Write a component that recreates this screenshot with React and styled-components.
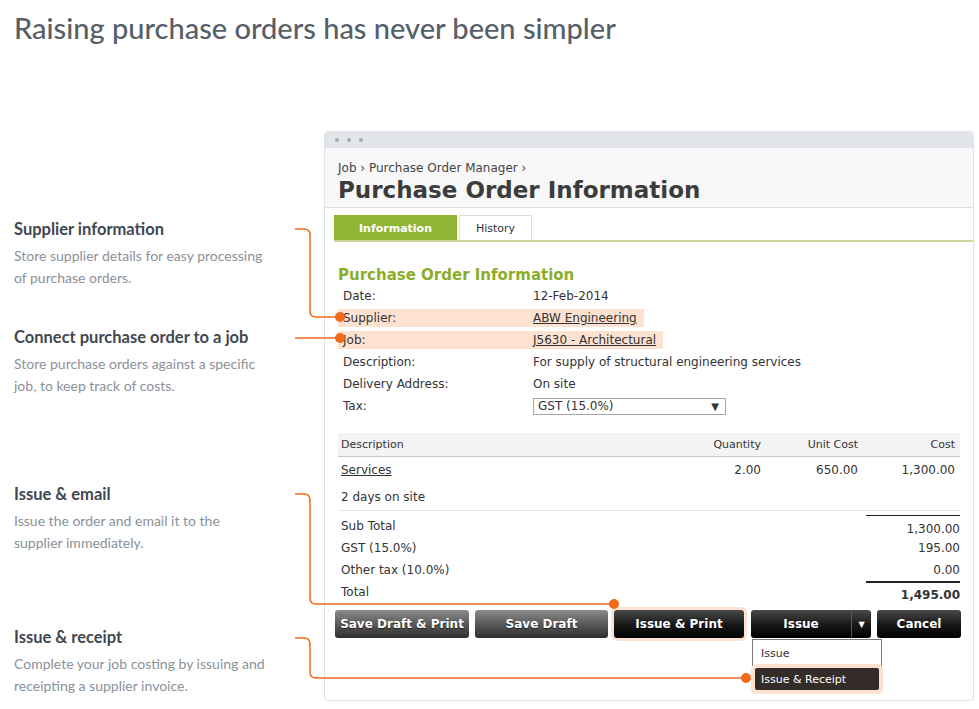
import React from 'react'
import styled, { createGlobalStyle } from 'styled-components'

const GlobalStyle = createGlobalStyle`
  body {
    margin: 0;
    background: #fff;
  }
`

const ORANGE = '#f26a1b'
const HALO = '#fde2d2'

const Page = styled.div`
  position: relative;
  width: 979px;
  height: 709px;
  overflow: hidden;
  font-family: Lato, "Open Sans", sans-serif;
`

const Heading = styled.h1`
  margin: 11px 0 0 14px;
  height: 120px;
  font-size: 29px;
  line-height: 34px;
  font-weight: 500;
  color: #575f69;
`

const Main = styled.div`
  display: flex;
  flex-direction: row;
`

const Features = styled.div`
  width: 310px;
  padding: 87px 0 0 14px;
  display: flex;
  flex-direction: column;
`

const Feature = styled.div`
  margin-top: ${(p) => p.gap || 0}px;
`

const FeatureTitle = styled.div`
  font-size: 16.5px;
  line-height: 22px;
  font-weight: 700;
  color: #3f4751;
`

const FeatureText = styled.div`
  margin-top: 5px;
  font-size: 14px;
  line-height: 22px;
  color: #8b9199;
`

const Window = styled.div`
  position: relative;
  width: 648px;
  height: 568px;
  border: 1px solid #dfe2e6;
  border-radius: 4px;
  font-family: "DejaVu Sans", Verdana, sans-serif;
  font-size: 12px;
  color: #333;
  background: #fff;
`

const TitleBar = styled.div`
  height: 16px;
  background: #e2e5e9;
  border-radius: 3px 3px 0 0;
  display: flex;
  align-items: center;
  gap: 8px;
  padding-left: 10px;
`

const Dot = styled.span`
  width: 4px;
  height: 4px;
  border-radius: 50%;
  background: #a7abb1;
`

const Header = styled.div`
  height: 60px;
  background: #f8f8f8;
  border-bottom: 1px solid #dedede;
  padding: 12px 0 0 13px;
  box-sizing: border-box;
`

const Crumb = styled.div`
  font-size: 12px;
  line-height: 16px;
  color: #444;
`

const PageTitle = styled.div`
  font-size: 23px;
  line-height: 28px;
  font-weight: 700;
  color: #3c3c3c;
`

const Tabs = styled.div`
  margin: 7px 0 0 9px;
  display: flex;
  gap: 2px;
  border-bottom: 2px solid #c6d99b;
`

const Tab = styled.div`
  width: ${(p) => p.w}px;
  height: 25px;
  box-sizing: border-box;
  display: flex;
  align-items: center;
  justify-content: center;
  font-size: 11px;
  font-weight: ${(p) => (p.active ? 700 : 400)};
  color: ${(p) => (p.active ? '#fff' : '#333')};
  background: ${(p) => (p.active ? '#8fb534' : '#fff')};
  border: 1px solid ${(p) => (p.active ? '#8fb534' : '#dcdcdc')};
  border-bottom: none;
`

const Body = styled.div`
  padding: 0 14px 0 13px;
`

const SectionTitle = styled.div`
  margin-top: 23px;
  font-size: 15px;
  line-height: 20px;
  font-weight: 700;
  color: #8aae2b;
`

const FormRow = styled.div`
  height: 22px;
  display: flex;
  align-items: center;
`

const FormCells = styled.div`
  display: flex;
  align-items: center;
  height: 18px;
  padding: 0 ${(p) => (p.hl ? 7 : 0)}px 0 5px;
  background: ${(p) => (p.hl ? HALO : 'transparent')};
`

const Label = styled.span`
  width: 190px;
`

const Link = styled.span`
  text-decoration: underline;
  color: #333;
`

const Select = styled.div`
  width: 193px;
  height: 17px;
  box-sizing: border-box;
  border: 1px solid #a5a5a5;
  display: flex;
  align-items: center;
  justify-content: space-between;
  padding: 0 6px 0 4px;
  font-size: 12px;
  span {
    font-size: 10px;
  }
`

const Table = styled.div`
  margin-top: 16px;
  width: 622px;
`

const Cols = styled.div`
  display: grid;
  grid-template-columns: 1fr 97px 97px 97px;
  align-items: center;
  height: ${(p) => p.h}px;
  padding-right: 5px;
  background: ${(p) => (p.head ? '#f3f3f3' : 'transparent')};
  border-bottom: ${(p) => (p.line ? `1px solid ${p.line}` : 'none')};
  font-size: ${(p) => (p.head ? 11 : 12)}px;
  padding-left: 3px;
`

const Num = styled.span`
  text-align: right;
`

const Totals = styled.div`
  display: grid;
  grid-template-columns: 1fr 94px;
  margin-top: 4px;
`

const TotalLabel = styled.div`
  height: 22px;
  display: flex;
  align-items: center;
  padding-left: 3px;
`

const TotalValue = styled.div`
  height: 22px;
  box-sizing: border-box;
  display: flex;
  align-items: center;
  justify-content: flex-end;
  padding-top: ${(p) => (p.top ? 4 : 0)}px;
  border-top: ${(p) => (p.top ? `${p.top}px solid #222` : 'none')};
  font-weight: ${(p) => (p.bold ? 700 : 400)};
`

const Buttons = styled.div`
  margin-top: 7px;
  margin-left: -3px;
  display: flex;
  gap: 6px;
`

const Button = styled.div`
  flex-shrink: 0;
  width: ${(p) => p.w}px;
  height: 28px;
  box-sizing: border-box;
  border-radius: 3px;
  display: flex;
  align-items: center;
  justify-content: center;
  font-size: 12px;
  font-weight: 700;
  color: #fff;
  text-shadow: 0 1px 1px rgba(0, 0, 0, 0.6);
  background: ${(p) =>
    p.dark
      ? 'linear-gradient(#4a4a4a, #1a1a1a 50%, #000)'
      : 'linear-gradient(#8c8c8c, #5a5a5a 50%, #2e2e2e)'};
  box-shadow: ${(p) => (p.halo ? `0 0 0 3px ${HALO}` : 'none')};
  margin-right: ${(p) => (p.halo ? 1 : 0)}px;
`

const Split = styled.div`
  position: relative;
  flex-shrink: 0;
  display: flex;
  border-radius: 3px;
  background: linear-gradient(#4a4a4a, #1a1a1a 50%, #000);
`

const SplitMain = styled(Button)`
  background: none;
  border-right: 1px solid #555;
  border-radius: 3px 0 0 3px;
`

const Caret = styled.div`
  width: 19px;
  display: flex;
  align-items: center;
  justify-content: center;
  color: #fff;
  font-size: 8px;
`

const Menu = styled.div`
  position: absolute;
  top: 29px;
  left: 1px;
  width: 130px;
  height: 52px;
  box-sizing: border-box;
  border: 1px solid #7b7b7b;
  background: #fff;
  padding: 2px 2px;
  font-size: 11px;
`

const MenuItem = styled.div`
  height: 22px;
  display: flex;
  align-items: center;
  padding-left: 6px;
  margin-top: ${(p) => (p.selected ? 4 : 0)}px;
  color: ${(p) => (p.selected ? '#fff' : '#333')};
  background: ${(p) => (p.selected ? '#342c29' : 'transparent')};
  border-radius: 2px;
  box-shadow: ${(p) => (p.selected ? `0 0 0 4px ${HALO}` : 'none')};
`

const Connectors = styled.svg`
  position: absolute;
  top: 0;
  left: 0;
  pointer-events: none;
`

const features = [
  {
    gap: 0,
    title: 'Supplier information',
    text: ['Store supplier details for easy processing', 'of purchase orders.'],
  },
  {
    gap: 37,
    title: 'Connect purchase order to a job',
    text: ['Store purchase orders against a specific', 'job, to keep track of costs.'],
  },
  {
    gap: 86,
    title: 'Issue & email',
    text: ['Issue the order and email it to the', 'supplier immediately.'],
  },
  {
    gap: 72,
    title: 'Issue & receipt',
    text: ['Complete your job costing by issuing and', 'receipting a supplier invoice.'],
  },
]

const paths = [
  'M295 229 H304 Q310 229 310 235 V311 Q310 317 316 317 H340',
  'M295 338 H340',
  'M295 494 H304 Q310 494 310 500 V598 Q310 604 316 604 H614',
  'M295 638 H304 Q310 638 310 644 V672 Q310 678 316 678 H746',
]

const dots = [
  [340, 317],
  [340, 338],
  [614, 604],
  [746, 678],
]

export default function App() {
  return (
    <Page>
      <GlobalStyle />
      <Heading>Raising purchase orders has never been simpler</Heading>
      <Main>
        <Features>
          {features.map((f) => (
            <Feature key={f.title} gap={f.gap}>
              <FeatureTitle>{f.title}</FeatureTitle>
              <FeatureText>
                {f.text[0]}
                <br />
                {f.text[1]}
              </FeatureText>
            </Feature>
          ))}
        </Features>

        <Window>
          <TitleBar>
            <Dot />
            <Dot />
            <Dot />
          </TitleBar>
          <Header>
            <Crumb>Job › Purchase Order Manager ›</Crumb>
            <PageTitle>Purchase Order Information</PageTitle>
          </Header>
          <Tabs>
            <Tab active w={123}>Information</Tab>
            <Tab w={73}>History</Tab>
          </Tabs>
          <Body>
            <SectionTitle>Purchase Order Information</SectionTitle>
            <FormRow>
              <FormCells>
                <Label>Date:</Label>
                <span>12-Feb-2014</span>
              </FormCells>
            </FormRow>
            <FormRow>
              <FormCells hl>
                <Label>Supplier:</Label>
                <Link>ABW Engineering</Link>
              </FormCells>
            </FormRow>
            <FormRow>
              <FormCells hl>
                <Label>Job:</Label>
                <Link>J5630 - Architectural</Link>
              </FormCells>
            </FormRow>
            <FormRow>
              <FormCells>
                <Label>Description:</Label>
                <span>For supply of structural engineering services</span>
              </FormCells>
            </FormRow>
            <FormRow>
              <FormCells>
                <Label>Delivery Address:</Label>
                <span>On site</span>
              </FormCells>
            </FormRow>
            <FormRow>
              <FormCells>
                <Label>Tax:</Label>
                <Select>
                  GST (15.0%)
                  <span>▼</span>
                </Select>
              </FormCells>
            </FormRow>

            <Table>
              <Cols head h={23} line="#c8c8c8">
                <span>Description</span>
                <Num>Quantity</Num>
                <Num>Unit Cost</Num>
                <Num>Cost</Num>
              </Cols>
              <Cols h={26}>
                <Link>Services</Link>
                <Num>2.00</Num>
                <Num>650.00</Num>
                <Num>1,300.00</Num>
              </Cols>
              <Cols h={27} line="#e6e6e6">
                <span>2 days on site</span>
              </Cols>
              <Totals>
                <TotalLabel>Sub Total</TotalLabel>
                <TotalValue top={1}>1,300.00</TotalValue>
                <TotalLabel>GST (15.0%)</TotalLabel>
                <TotalValue>195.00</TotalValue>
                <TotalLabel>Other tax (10.0%)</TotalLabel>
                <TotalValue>0.00</TotalValue>
                <TotalLabel>Total</TotalLabel>
                <TotalValue top={2} bold>1,495.00</TotalValue>
              </Totals>
            </Table>

            <Buttons>
              <Button w={134}>Save Draft &amp; Print</Button>
              <Button w={133}>Save Draft</Button>
              <Button dark halo w={130}>Issue &amp; Print</Button>
              <Split>
                <SplitMain w={101}>Issue</SplitMain>
                <Caret>▼</Caret>
                <Menu>
                  <MenuItem>Issue</MenuItem>
                  <MenuItem selected>Issue &amp; Receipt</MenuItem>
                </Menu>
              </Split>
              <Button dark w={84}>Cancel</Button>
            </Buttons>
          </Body>
        </Window>
      </Main>

      <Connectors width="979" height="709" viewBox="0 0 979 709">
        {paths.map((d) => (
          <path key={d} d={d} fill="none" stroke={ORANGE} strokeWidth="1.5" />
        ))}
        {dots.map(([x, y]) => (
          <circle key={x + '-' + y} cx={x} cy={y} r="5" fill={ORANGE} />
        ))}
      </Connectors>
    </Page>
  )
}
